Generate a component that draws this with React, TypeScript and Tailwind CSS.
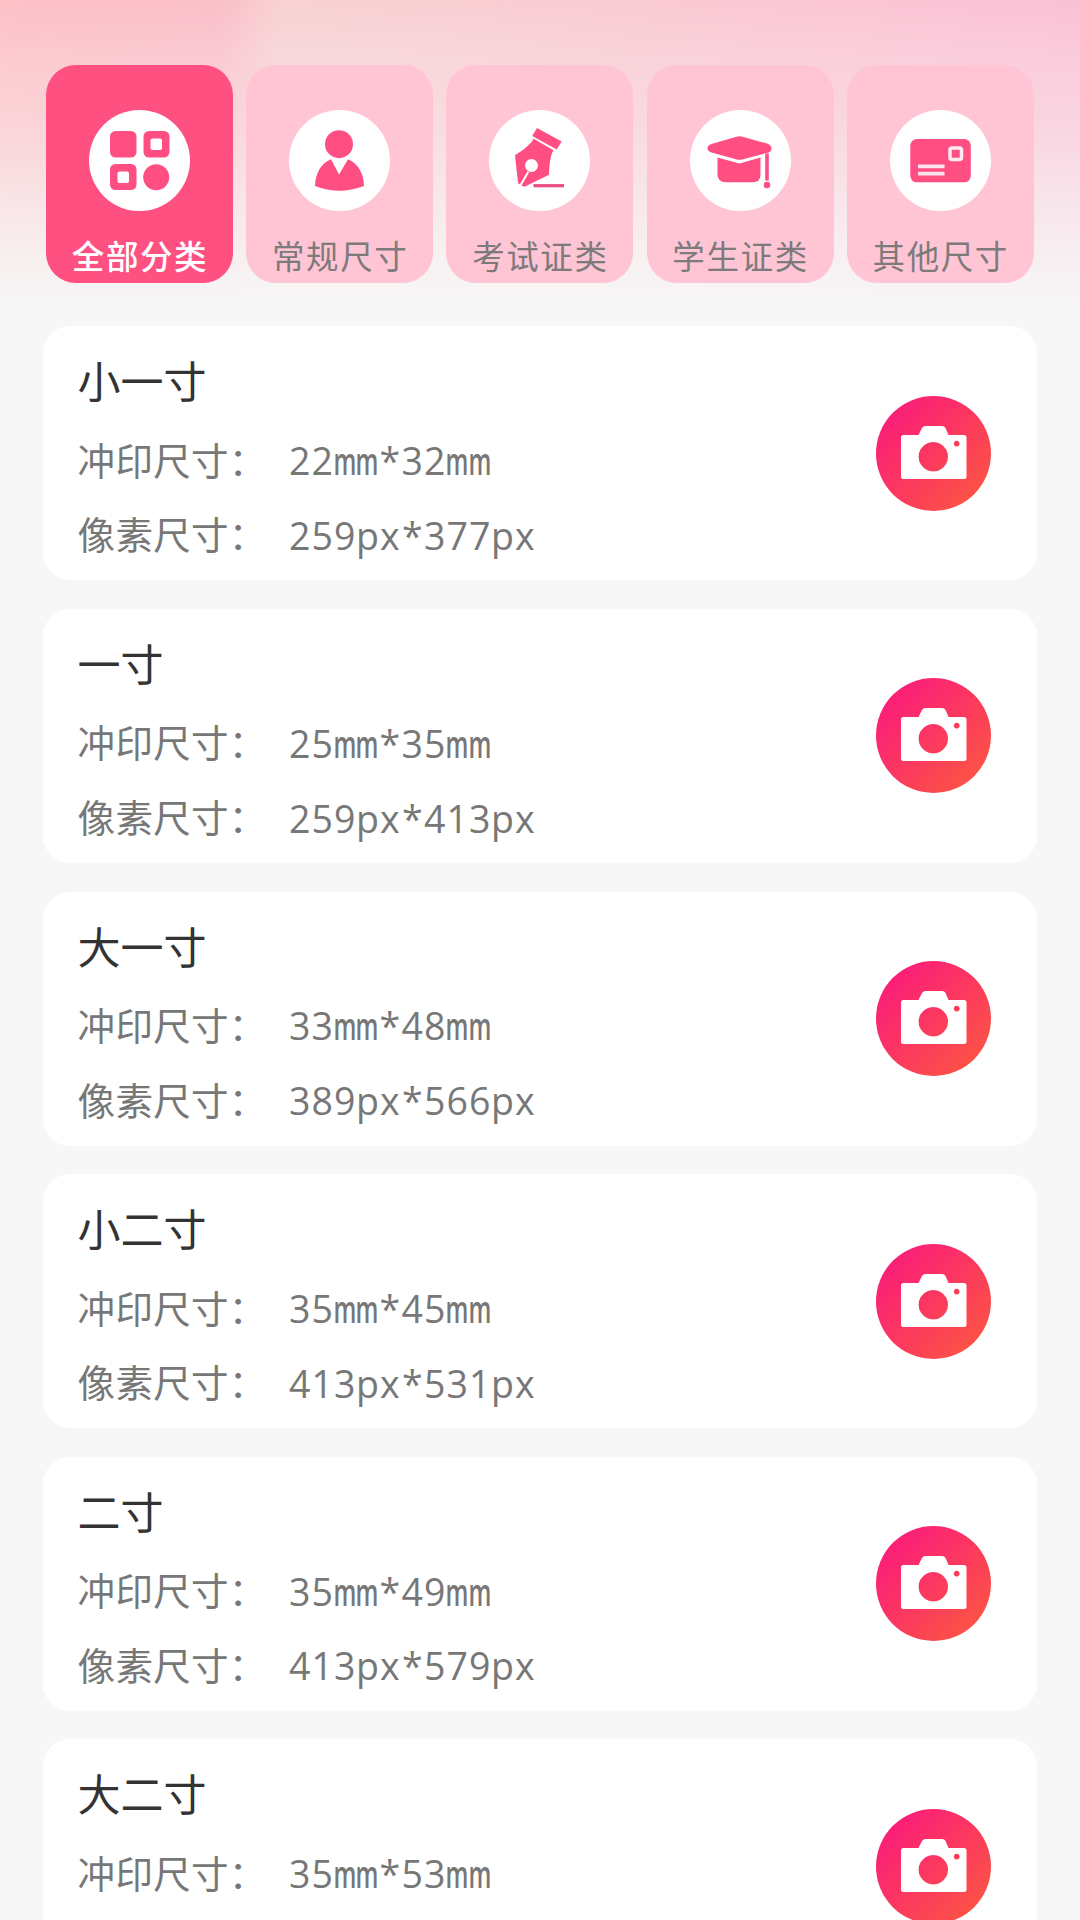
import React from "react";

const PINK = "#ff4f82";

function GridIcon() {
  return (
    <svg viewBox="0 0 101 101" className="size-[101px]" fill={PINK}>
      <rect x="21" y="21" width="26.5" height="26.5" rx="5.5" />
      <path fillRule="evenodd" d="M60 21h15a5.500 5.500 0 0 1 5.500 5.500v15.500a5.500 5.500 0 0 1-5.500 5.500h-15a5.500 5.500 0 0 1-5.500-5.500v-15.500a5.500 5.500 0 0 1 5.500-5.500zM63.500 28.500a2 2 0 0 0-2 2v7.500a2 2 0 0 0 2 2h7.500a2 2 0 0 0 2-2v-7.500a2 2 0 0 0-2-2z" />
      <path fillRule="evenodd" d="M26.500 54h15.500a5.500 5.500 0 0 1 5.500 5.500v15a5.500 5.500 0 0 1-5.500 5.500h-15.500a5.500 5.500 0 0 1-5.500-5.500v-15a5.500 5.500 0 0 1 5.500-5.500zM30.500 61.500a2 2 0 0 0-2 2v7.500a2 2 0 0 0 2 2h7.500a2 2 0 0 0 2-2v-7.500a2 2 0 0 0-2-2z" />
      <circle cx="67.200" cy="67.300" r="13" />
    </svg>
  );
}

function PersonIcon() {
  return (
    <svg viewBox="0 0 101 101" className="size-[101px]" fill={PINK}>
      <circle cx="50" cy="34.200" r="14" />
      <path d="M42 49.300L50 64.500 59 49.300C68.500 53.500 75 63 75 76Q50 85.500 26 76C26.500 63 32 53.500 42 49.300z" />
    </svg>
  );
}

function PenIcon() {
  return (
    <svg viewBox="0 0 101 101" className="size-[101px]" fill={PINK}>
      <path d="M48 18L72.700 31.500 67.700 39.500 43.200 26z" />
      <path d="M44.800 28.700L64.500 40.200C61 46 60.500 54 60 64.700L35.500 76.700 32.500 75.500 40.200 62.200L38.500 61.200 30.700 74.500 29 73 26 45.300C34 40 41 35 44.800 28.700z" />
      <circle cx="42.500" cy="55.500" r="6.500" fill="#fff" />
      <path d="M44.500 75.700H75" stroke="#ea4c83" strokeWidth="3.200" />
    </svg>
  );
}

function CapIcon() {
  return (
    <svg viewBox="0 0 101 101" className="size-[101px]" fill={PINK}>
      <path d="M46.500 26.700Q49.500 25.700 52.500 26.700L77 33.500Q81.500 35 81.500 38.500T77 43L53 49.200Q49.500 50.200 46 49.200L21.500 42.500Q17.500 41 17.500 38.300T21.500 34z" />
      <path d="M27.500 47.500L49.500 53.500 70.500 47.500V65.500Q70 72.300 63 72.300H35Q28.500 72 27.500 65.500z" />
      <path d="M77 43.500V70.500" stroke={PINK} strokeWidth="3.600" />
      <circle cx="77" cy="75" r="3.300" />
    </svg>
  );
}

function CardIcon() {
  return (
    <svg viewBox="0 0 101 101" className="size-[101px]" fill={PINK}>
      <rect x="20.300" y="29" width="60.500" height="43.300" rx="6.500" />
      <rect x="60" y="38" width="11.500" height="11.500" rx="2" fill="none" stroke="#ffeaf1" strokeWidth="3.500" />
      <path d="M28 56.300H54.500M28 63.700H54.500" stroke="#ffe4ed" strokeWidth="3.700" />
    </svg>
  );
}

function CameraIcon() {
  return (
    <svg viewBox="0 0 115 115" className="size-full">
      <path fillRule="evenodd" fill="#fff" d="M27.500 39H42.500L46 32Q47.200 30 49.500 30H66Q68.500 30 69.500 32L72.500 39H88Q90.500 39 90.500 41.500V80.500Q90.500 83 88 83H27.500Q25 83 25 80.500V41.500Q25 39 27.500 39zM57.300 46a14.700 14.700 0 1 0 .01 0zM80.700 44.800a2.900 2.900 0 1 0 .01 0z" />
    </svg>
  );
}

const tabs = [
  { label: "全部分类", icon: <GridIcon /> },
  { label: "常规尺寸", icon: <PersonIcon /> },
  { label: "考试证类", icon: <PenIcon /> },
  { label: "学生证类", icon: <CapIcon /> },
  { label: "其他尺寸", icon: <CardIcon /> },
];

const sizes = [
  { name: "小一寸", print: "22mm*32mm", pixels: "259px*377px" },
  { name: "一寸", print: "25mm*35mm", pixels: "259px*413px" },
  { name: "大一寸", print: "33mm*48mm", pixels: "389px*566px" },
  { name: "小二寸", print: "35mm*45mm", pixels: "413px*531px" },
  { name: "二寸", print: "35mm*49mm", pixels: "413px*579px" },
  { name: "大二寸", print: "35mm*53mm", pixels: "" },
];

/* Sets text on a fixed pitch; "m" is condensed to fit its cell. */
function MonoText({ text }: { text: string }) {
  return (
    <span className="mt-[5px] flex font-['Open_Sans','Noto_Sans',sans-serif]">
      {[...text].map((ch, i) => (
        <span key={i} className="flex w-[22.5px] justify-center">
          {ch === "m" ? <span className="scale-x-[0.64] font-semibold">m</span> : ch}
        </span>
      ))}
    </span>
  );
}

function Row({ label, value }: { label: string; value: string }) {
  return (
    <div className="flex h-[74.7px] items-center leading-[50px]">
      <span className="w-[211px] whitespace-nowrap tracking-[0.3px]">{label}</span>
      <MonoText text={value} />
    </div>
  );
}

export default function App() {
  return (
    <div className="h-[1920px] w-[1080px] overflow-hidden bg-[#f7f7f7] font-['Noto_Sans_CJK_SC',sans-serif]">
      <div className="bg-[linear-gradient(to_bottom,#f7f7f700_0px,#f7f7f733_60px,#f7f7f759_125px,#f7f7f7a6_200px,#f7f7f7dd_260px,#f7f7f7_315px),linear-gradient(to_right,#fdc0c6_0px,#fbbfc9_220px,#f8d1d3_280px,#f9ccd2_560px,#fbc6d4_820px,#fbc1d6_1080px)] bg-[length:1080px_326px] bg-no-repeat">
        <nav className="flex h-[326.4px] gap-[13.2px] pl-[46px] pt-[64.5px]">
          {tabs.map((tab, i) => (
            <button
              key={tab.label}
              className={
                "flex h-[218.5px] w-[187px] shrink-0 flex-col items-center rounded-[30px] pt-[45.5px] " +
                (i === 0 ? "bg-[#ff5082] font-medium text-white" : "bg-[#ffc5d5] text-[#7d7a7b]")
              }
            >
              <span className="size-[101px] rounded-full bg-white">{tab.icon}</span>
              <span className="mt-[19.5px] pl-px text-[32.5px] leading-[48px] tracking-[1.6px]">{tab.label}</span>
            </button>
          ))}
        </nav>
        <main className="flex flex-col gap-[28.6px] px-[43px]">
          {sizes.map((s) => (
            <section
              key={s.name}
              className="flex h-[254px] shrink-0 items-center justify-between rounded-[27px] bg-white pl-[34.6px] pr-[46px]"
            >
              <div className="self-start pt-[20px] text-[37.5px] text-[#777777]">
                <h2 className="mb-[9px] h-[66px] text-[43px] leading-[66px] text-[#333333]">{s.name}</h2>
                <Row label="冲印尺寸：" value={s.print} />
                {s.pixels && <Row label="像素尺寸：" value={s.pixels} />}
              </div>
              <button className="size-[115px] rounded-full bg-[linear-gradient(135deg,#fb1d7a_12%,#fc5345_88%)]">
                <CameraIcon />
              </button>
            </section>
          ))}
        </main>
      </div>
    </div>
  );
}
